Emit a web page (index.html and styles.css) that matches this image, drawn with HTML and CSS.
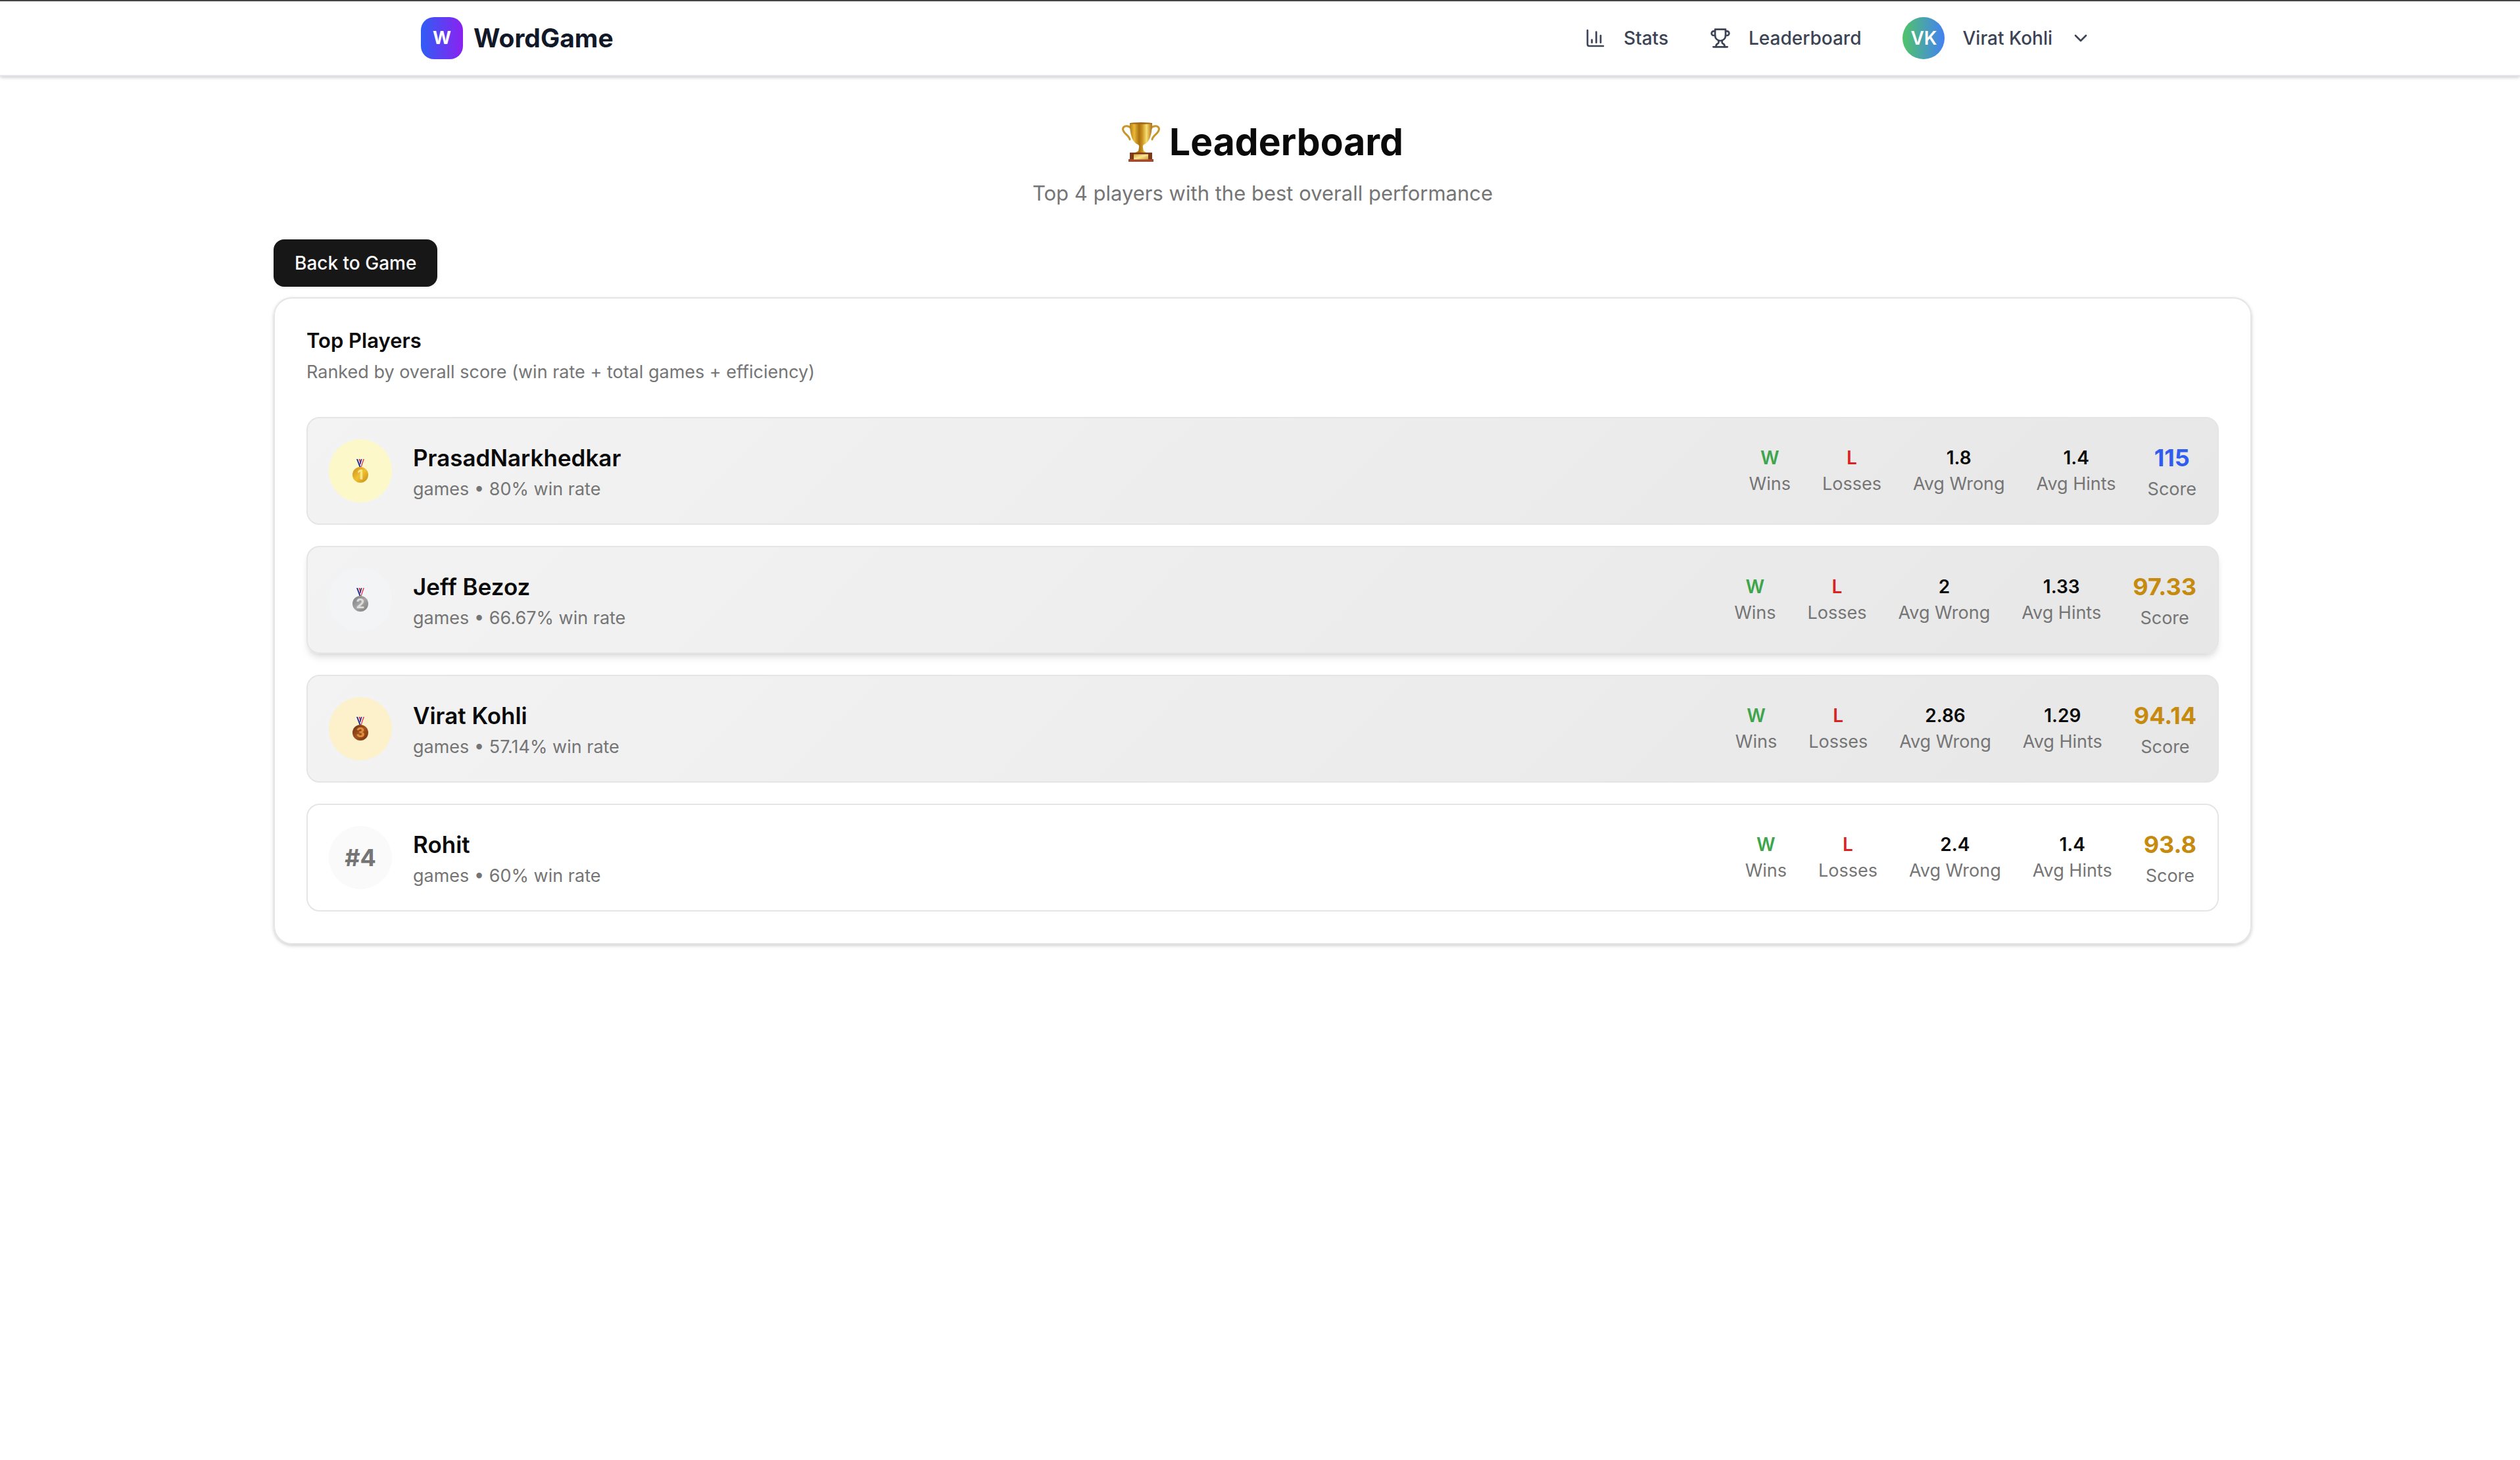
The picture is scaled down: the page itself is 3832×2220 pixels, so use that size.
FILE: index.html
```html
<!DOCTYPE html>
<html lang="en">
<head>
<meta charset="utf-8">
<title>WordGame - Leaderboard</title>
<link rel="stylesheet" href="styles.css">
</head>
<body>
<svg class="defs" aria-hidden="true">
  <defs>
    <linearGradient id="gold" x1="0" x2="1" y1="0" y2="0">
      <stop offset="0" stop-color="#b87a12"/><stop offset=".2" stop-color="#e9b938"/><stop offset=".42" stop-color="#a8700f"/><stop offset=".55" stop-color="#c88f1e"/><stop offset=".75" stop-color="#f8de72"/><stop offset="1" stop-color="#a96c10"/>
    </linearGradient>
    <linearGradient id="plate" x1="0" x2="1" y1="0" y2="1">
      <stop offset="0" stop-color="#d9a63a"/><stop offset=".5" stop-color="#f8e596"/><stop offset="1" stop-color="#d39a2c"/>
    </linearGradient>
    <linearGradient id="medal-gold" x1="0" x2="1" y1="0" y2="1">
      <stop offset="0" stop-color="#c98f20"/><stop offset=".5" stop-color="#efc02f"/><stop offset="1" stop-color="#c58a1c"/>
    </linearGradient>
    <linearGradient id="medal-silver" x1="0" x2="1" y1="0" y2="1">
      <stop offset="0" stop-color="#7c7c7c"/><stop offset=".5" stop-color="#a5a5a5"/><stop offset="1" stop-color="#7b7b7b"/>
    </linearGradient>
    <linearGradient id="medal-bronze" x1="0" x2="1" y1="0" y2="1">
      <stop offset="0" stop-color="#6e2c0c"/><stop offset=".5" stop-color="#a0541f"/><stop offset="1" stop-color="#752f0d"/>
    </linearGradient>
    <g id="ribbon">
      <path d="M6 0h12l-4.500 12h-3z" fill="#f6f6fb"/>
      <path d="M6 0h2l4.500 12h-2z" fill="#1d2a86"/>
      <path d="M9.500 0h2l1.500 5-1 3z" fill="#d93a3a"/>
      <path d="M13 0h1.500L12 9l-1-2z" fill="#1d2a86"/>
      <path d="M16.300 0H18l-4.200 12h-1.300z" fill="#e5404a"/>
    </g>
  </defs>
</svg>
<header class="topbar">
  <nav class="nav">
    <a class="brand" href="#"><span class="logo">W</span><span class="brand-name">WordGame</span></a>
    <div class="menu">
      <a class="menu-link" href="#stats">
        <svg class="icon" viewBox="0 0 24 24"><path d="M3 3v16a2 2 0 0 0 2 2h16"/><path d="M18 17V9"/><path d="M13 17V5"/><path d="M8 17v-3"/></svg>
        Stats</a>
      <a class="menu-link" href="#leaderboard">
        <svg class="icon" viewBox="0 0 24 24"><path d="M6 9H4.500a2.500 2.500 0 0 1 0-5H6"/><path d="M18 9h1.500a2.500 2.500 0 0 0 0-5H18"/><path d="M4 22h16"/><path d="M10 14.660V17c0 .550-.470.980-.970 1.210C7.850 18.750 7 20.240 7 22"/><path d="M14 14.660V17c0 .550.470.980.970 1.210C16.150 18.750 17 20.240 17 22"/><path d="M18 2H6v7a6 6 0 0 0 12 0V2Z"/></svg>
        Leaderboard</a>
      <button class="account" type="button"><span class="avatar">VK</span>Virat Kohli
        <svg class="icon" viewBox="0 0 24 24"><path d="m6 9 6 6 6-6"/></svg></button>
    </div>
  </nav>
</header>
<main class="page">
  <div class="intro">
    <h1 class="title">
      <svg class="trophy" viewBox="0 0 58 60">
        <g fill="none" stroke="#c9962c" stroke-width="3" stroke-linecap="round"><path d="M14 9C10 4 2 5 1.500 10c0 7 9 9 10.500 16"/><path d="M44 9c4-5 12-4 12.500 1 0 7-9 9-10.500 16"/></g>
        <path d="M12 1h34c0 15-3 29-12 32.500-2 1-2.500 2.500-2 5l1 5 5 2.500v1H20v-1l5-2.500 1-5c.500-2.500 0-4-2-5C15 30 12 16 12 1z" fill="url(#gold)"/>
        <ellipse cx="29" cy="1.500" rx="17" ry="1.500" fill="#a06a18"/>
        <path d="M12 46h34v10H12z" fill="#7d3a1b"/><path d="M10 56h38v4H10z" fill="#a24a2c"/><path d="M18 48.500h22v8H18z" fill="url(#plate)"/>
      </svg>
      Leaderboard</h1>
    <p class="subtitle">Top 4 players with the best overall performance</p>
  </div>
  <button class="back" type="button">Back to Game</button>
  <section class="card">
    <h2 class="card-title">Top Players</h2>
    <p class="card-note">Ranked by overall score (win rate + total games + efficiency)</p>
    <ol class="players">
      <li class="player podium">
        <span class="rank first"><svg class="medal" viewBox="0 0 24 36"><use href="#ribbon"/><circle cx="12" cy="24" r="12" fill="url(#medal-gold)"/><text x="12" y="31" class="digit gold-digit">1</text></svg></span>
        <div class="who"><h3 class="name">PrasadNarkhedkar</h3><p class="rate">games • 80% win rate</p></div>
        <dl class="stats">
          <div class="stat"><dt>Wins</dt><dd class="win">W</dd></div>
          <div class="stat"><dt>Losses</dt><dd class="loss">L</dd></div>
          <div class="stat"><dt>Avg Wrong</dt><dd>1.8</dd></div>
          <div class="stat"><dt>Avg Hints</dt><dd>1.4</dd></div>
          <div class="stat score top"><dt>Score</dt><dd>115</dd></div>
        </dl>
      </li>
      <li class="player podium raised">
        <span class="rank second"><svg class="medal" viewBox="0 0 24 36"><use href="#ribbon"/><circle cx="12" cy="24" r="12" fill="url(#medal-silver)"/><text x="12" y="31" class="digit silver-digit">2</text></svg></span>
        <div class="who"><h3 class="name">Jeff Bezoz</h3><p class="rate">games • 66.67% win rate</p></div>
        <dl class="stats">
          <div class="stat"><dt>Wins</dt><dd class="win">W</dd></div>
          <div class="stat"><dt>Losses</dt><dd class="loss">L</dd></div>
          <div class="stat"><dt>Avg Wrong</dt><dd>2</dd></div>
          <div class="stat"><dt>Avg Hints</dt><dd>1.33</dd></div>
          <div class="stat score"><dt>Score</dt><dd>97.33</dd></div>
        </dl>
      </li>
      <li class="player podium">
        <span class="rank third"><svg class="medal" viewBox="0 0 24 36"><use href="#ribbon"/><circle cx="12" cy="24" r="12" fill="url(#medal-bronze)"/><text x="12" y="31" class="digit bronze-digit">3</text></svg></span>
        <div class="who"><h3 class="name">Virat Kohli</h3><p class="rate">games • 57.14% win rate</p></div>
        <dl class="stats">
          <div class="stat"><dt>Wins</dt><dd class="win">W</dd></div>
          <div class="stat"><dt>Losses</dt><dd class="loss">L</dd></div>
          <div class="stat"><dt>Avg Wrong</dt><dd>2.86</dd></div>
          <div class="stat"><dt>Avg Hints</dt><dd>1.29</dd></div>
          <div class="stat score"><dt>Score</dt><dd>94.14</dd></div>
        </dl>
      </li>
      <li class="player">
        <span class="rank">#4</span>
        <div class="who"><h3 class="name">Rohit</h3><p class="rate">games • 60% win rate</p></div>
        <dl class="stats">
          <div class="stat"><dt>Wins</dt><dd class="win">W</dd></div>
          <div class="stat"><dt>Losses</dt><dd class="loss">L</dd></div>
          <div class="stat"><dt>Avg Wrong</dt><dd>2.4</dd></div>
          <div class="stat"><dt>Avg Hints</dt><dd>1.4</dd></div>
          <div class="stat score"><dt>Score</dt><dd>93.8</dd></div>
        </dl>
      </li>
    </ol>
  </section>
</main>
</body>
</html>
```
FILE: styles.css
```css
* { box-sizing: border-box; margin: 0; padding: 0; }

body {
  background: #fff;
  color: #0a0a0a;
  font-family: Inter, "Liberation Sans", sans-serif;
  font-size: 28px;
  line-height: 40px;
}

a { color: inherit; text-decoration: none; }
button { font: inherit; color: inherit; background: none; border: 0; cursor: pointer; }
ol { list-style: none; }
.defs { position: absolute; width: 0; height: 0; }

/* Navigation */
.topbar {
  border-top: 2px solid #444;
  border-bottom: 2px solid #e5e6eb;
  padding-left: 8px;
  box-shadow: 0 2px 6px rgba(0, 0, 0, .1), 0 2px 4px rgba(0, 0, 0, .1);
}
.nav {
  display: flex;
  align-items: center;
  justify-content: space-between;
  max-width: 2560px;
  height: 112px;
  margin: 0 auto;
}
.brand { display: flex; align-items: center; gap: 16px; }
.logo {
  display: grid;
  place-items: center;
  width: 64px;
  height: 64px;
  border-radius: 20px;
  background: linear-gradient(90deg, #2f5df5, #8b22f0);
  color: #fff;
  font-size: 27px;
  font-weight: 700;
}
.brand-name { font-size: 39px; line-height: 56px; font-weight: 700; color: #111827; }
.menu { display: flex; align-items: center; gap: 63px; padding-right: 20px; color: #3b4354; font-weight: 500; }
.menu-link, .account { display: flex; align-items: center; gap: 27px; }
.icon {
  width: 32px;
  height: 32px;
  fill: none;
  stroke: currentColor;
  stroke-width: 2;
  stroke-linecap: round;
  stroke-linejoin: round;
}
.avatar {
  display: grid;
  place-items: center;
  width: 64px;
  height: 64px;
  border-radius: 50%;
  background: linear-gradient(90deg, #50c468, #4281f4);
  color: #fff;
  font-weight: 600;
}

/* Page */
.page { max-width: 3080px; margin: 0 auto; padding: 64px 32px 64px 40px; }
.intro { text-align: center; margin-bottom: 46px; }
.title {
  display: flex;
  justify-content: center;
  align-items: center;
  gap: 14px;
  font-size: 57px;
  line-height: 72px;
  font-weight: 700;
}
.trophy { width: 58px; height: 60px; }
.subtitle { margin-top: 18px; font-size: 31px; line-height: 48px; color: #757575; }
.back {
  display: block;
  height: 72px;
  padding: 0 32px;
  margin-bottom: 16px;
  border-radius: 16px;
  background: #171717;
  color: #fafafa;
  font-weight: 500;
  box-shadow: 0 2px 4px rgba(0, 0, 0, .05);
}

.card {
  padding: 48px;
  border: 2px solid #e5e5e5;
  border-radius: 28px;
  box-shadow: 0 2px 6px rgba(0, 0, 0, .1), 0 2px 4px rgba(0, 0, 0, .1);
}
.card-title { font-size: 31px; line-height: 32px; font-weight: 600; }
.card-note { margin-top: 12px; font-size: 27px; color: #757575; }
.players { display: grid; gap: 32px; margin-top: 48px; }

/* Player rows */
.player {
  display: flex;
  align-items: center;
  gap: 32px;
  padding: 32px;
  border: 2px solid #e5e5e5;
  border-radius: 20px;
}
.podium { background: linear-gradient(135deg, #f3f3f3, #e7e7e7); }
.raised { box-shadow: 0 8px 12px -2px rgba(0, 0, 0, .1), 0 4px 8px -4px rgba(0, 0, 0, .1); }
.rank {
  display: grid;
  place-items: center;
  width: 96px;
  height: 96px;
  border-radius: 50%;
  background: #fafafa;
  color: #757575;
  font-size: 36px;
  font-weight: 700;
}
.first { background: #fdf8c9; }
.second { background: #f3f4f6; }
.third { background: #fcf1ca; }
.medal { width: 24px; height: 36px; }
.digit { font-size: 20px; font-weight: 800; text-anchor: middle; }
.gold-digit { fill: #f9e58b; }
.silver-digit { fill: #dcdcdc; }
.bronze-digit { fill: #dd8d3c; }
.who { flex: 1; }
.name { font-size: 35px; line-height: 56px; font-weight: 600; }
.rate { font-size: 27px; color: #757575; }
.stats { display: flex; align-items: center; gap: 48px; text-align: center; }
.stat { display: flex; flex-direction: column-reverse; }
.stat dt { font-size: 27px; color: #757575; }
.stat dd { font-weight: 600; }
.stat .win { color: #3fa54c; }
.stat .loss { color: #d8231f; }
.score dd { font-size: 36px; line-height: 56px; font-weight: 700; color: #c68a0f; }
.top dd { color: #305cf0; }
```
